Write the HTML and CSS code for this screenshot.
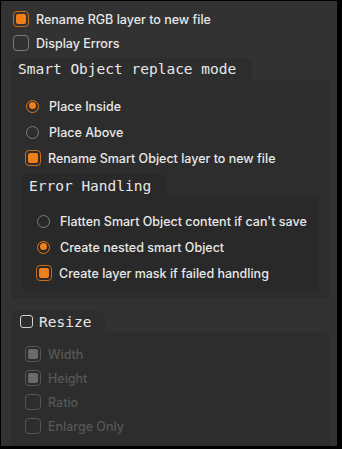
FILE: index.html
```html
<!DOCTYPE html>
<html lang="en">
<head>
  <meta charset="UTF-8" />
  <meta name="viewport" content="width=device-width, initial-scale=1.0"/>
  <title>Export Options</title>
  <link rel="stylesheet" href="styles.css">
</head>
<body>
  <div class="panel">
    <label class="row top">
      <span class="check on"></span>
      <span class="label">Rename RGB layer to new file</span>
    </label>
    <label class="row top">
      <span class="check"></span>
      <span class="label">Display Errors</span>
    </label>

    <div class="group smart">
      <div class="group-tab">Smart Object replace mode</div>
      <div class="group-body">
        <label class="row tall">
          <span class="radio on"></span>
          <span class="label">Place Inside</span>
        </label>
        <label class="row tall">
          <span class="radio"></span>
          <span class="label">Place Above</span>
        </label>
        <label class="row tall">
          <span class="check on"></span>
          <span class="label">Rename Smart Object layer to new file</span>
        </label>

        <div class="group inner">
          <div class="group-tab">Error Handling</div>
          <div class="group-body">
            <label class="row tall">
              <span class="radio"></span>
              <span class="label">Flatten Smart Object content if can't save</span>
            </label>
            <label class="row tall">
              <span class="radio on"></span>
              <span class="label">Create nested smart Object</span>
            </label>
            <label class="row tall">
              <span class="check on"></span>
              <span class="label">Create layer mask if failed handling</span>
            </label>
          </div>
        </div>
      </div>
    </div>

    <div class="group resize">
      <div class="group-tab">
        <span class="check small"></span>
        Resize
      </div>
      <div class="group-body">
        <label class="row disabled">
          <span class="check on"></span>
          <span class="label">Width</span>
        </label>
        <label class="row disabled">
          <span class="check on"></span>
          <span class="label">Height</span>
        </label>
        <label class="row disabled">
          <span class="check"></span>
          <span class="label">Ratio</span>
        </label>
        <label class="row disabled">
          <span class="check"></span>
          <span class="label">Enlarge Only</span>
        </label>
      </div>
    </div>
  </div>
</body>
</html>
```

FILE: styles.css
```css
body {
  margin: 0;
  padding: 1px 5px 0 1px;
  height: 449px;
  box-sizing: border-box;
  overflow: hidden;
  background: #000;
  font-family: Inter, 'Liberation Sans', sans-serif;
  font-size: 12.5px;
  font-weight: 500;
  color: #e8e8e8;
}

.panel {
  height: 445px;
  overflow: hidden;
  background: #323232;
  padding: 6px 7px 0 12px;
  box-sizing: border-box;
}

.row {
  display: flex;
  align-items: center;
  gap: 7px;
  height: 24px;
}

.row.tall {
  height: 26px;
}

/* checkbox */
.check {
  position: relative;
  flex: none;
  width: 16px;
  height: 16px;
  box-sizing: border-box;
  border: 1.5px solid #7a7a7a;
  border-radius: 4px;
}

.check.on {
  border-color: #c96c17;
}

.check.on::after {
  content: "";
  position: absolute;
  left: 1.5px;
  top: 1.5px;
  width: 10px;
  height: 10px;
  border-radius: 2px;
  background: #f07f1a;
}

.check.small {
  width: 13px;
  height: 13px;
  border: 1px solid #cfcfcf;
  border-radius: 3px;
}

/* radio */
.radio {
  position: relative;
  flex: none;
  width: 13px;
  height: 13px;
  margin: 0 3px 0 1px;
  box-sizing: border-box;
  border: 1.5px solid #7d7d7d;
  border-radius: 50%;
}

.radio.on {
  border-color: #e27818;
}

.radio.on::after {
  content: "";
  position: absolute;
  left: 1.5px;
  top: 1.5px;
  width: 7px;
  height: 7px;
  border-radius: 50%;
  background: #f07f1a;
}

/* groups */
.group-tab {
  display: inline-flex;
  align-items: center;
  height: 22px;
  padding: 0 16px 0 7px;
  border-radius: 6px 6px 0 0;
  font-family: 'DejaVu Sans Mono', monospace;
  font-size: 14.5px;
  font-weight: 400;
  color: #e8e8e8;
  background: #2d2d2d;
}

.group-body {
  background: #2d2d2d;
  border-radius: 0 6px 6px 6px;
  padding: 13px 12px 8px 14px;
}

.group.smart {
  margin: 3px 0 0 -2px;
}

.group.inner {
  margin: 3px 0 0 -3px;
}

.group.inner .group-tab {
  height: 23px;
  padding-left: 7px;
  background: #292929;
}

.group.inner .group-body {
  background: #292929;
  padding: 11px 0 5px 14px;
}

.group.resize {
  margin: 12px 0 0 -2px;
}

.group.resize .group-tab {
  gap: 6px;
  height: 21px;
  padding: 0 14px 0 9px;
}

.group.resize .group-body {
  height: 130px;
  padding: 10px 0 0 14px;
}

.row.disabled {
  color: #575757;
}

.row.disabled .check {
  border-color: #555;
}

.row.disabled .check.on::after {
  background: #6b6b6b;
}
```
